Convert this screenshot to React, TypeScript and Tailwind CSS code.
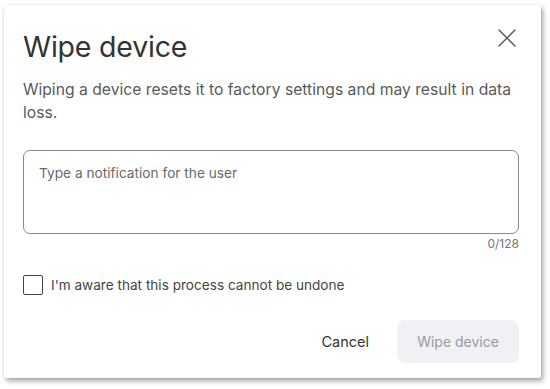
export default function App() {
  return (
    <div className="w-[550px] h-[389px] bg-white pl-[4px] pt-[5px] font-['Inter',sans-serif]">
      {/* Dialog card */}
      <div className="relative w-[537px] h-[373px] bg-white rounded-[2px] shadow-[2px_3px_5px_rgba(0,0,0,0.35),0_0_2px_rgba(0,0,0,0.12)] px-[19px] pt-[24px]">
        <button className="absolute right-[25px] top-[24px] text-[#555] p-0">
          <svg width="18" height="18" viewBox="0 0 18 18" fill="none" stroke="currentColor" strokeWidth="1.4" strokeLinecap="round">
            <path d="M1 1L17 17M17 1L1 17" />
          </svg>
        </button>

        <h2 className="text-[28.5px] leading-[36px] text-[#333] font-normal tracking-[-0.2px]">Wipe device</h2>
        <p className="mt-[13px] text-[15.7px] leading-[23px] text-[#5a5a5a]">
          Wiping a device resets it to factory settings and may result in data loss.
        </p>

        <div className="mt-[26px]">
          <textarea
            placeholder="Type a notification for the user"
            className="block w-[496px] h-[84px] resize-none border border-[#8a8a8a] rounded-[7px] px-[15px] py-[12px] text-[13.7px] leading-[20px] text-[#333] placeholder:text-[#6a6a6a] outline-none"
          />
          <div className="w-[496px] text-right text-[12px] leading-[16px] text-[#777] mt-[2px]">0/128</div>
        </div>

        <label className="mt-[23px] flex items-center gap-[8px]">
          <span className="h-[20px] w-[20px] border border-[#444] rounded-[2px] shrink-0" />
          <span className="text-[13.6px] text-[#444]">I'm aware that this process cannot be undone</span>
        </label>

        <div className="mt-[25px] w-[496px] flex justify-end gap-[12px]">
          <button className="h-[43px] px-[16px] rounded-[8px] text-[14.5px] text-[#333]">Cancel</button>
          <button className="h-[43px] w-[122px] rounded-[8px] bg-[#eff1f4] text-[14px] text-[#9b9b9b]" disabled>
            Wipe device
          </button>
        </div>
      </div>
    </div>
  );
}
